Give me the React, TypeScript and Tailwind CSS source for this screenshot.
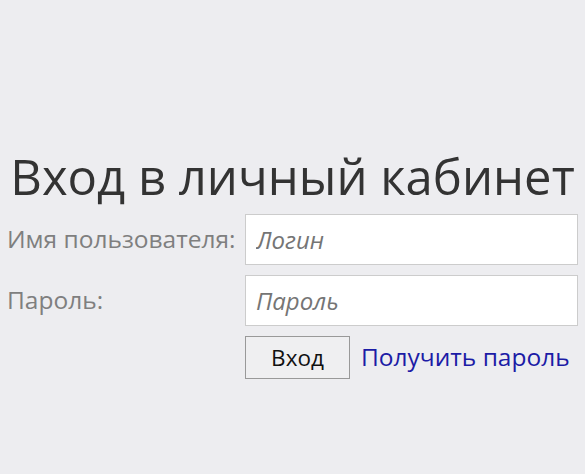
import React from 'react';

export default function App() {
  return (
    <div className="min-h-[474px] w-full bg-[#ededf0] font-['Open_Sans',sans-serif] pt-[143px]">
      <h1 className="text-center text-[49px] leading-[66px] text-[#333] whitespace-nowrap">
        Вход в личный кабинет
      </h1>
      <form
        className="grid grid-cols-[245px_333px] gap-y-[10px] mt-[5px]"
        onSubmit={(e) => e.preventDefault()}
      >
        <label className="flex items-center pl-[7px] text-[24.5px] text-[#7f7f7f] whitespace-nowrap">
          Имя пользователя:
        </label>
        <input
          type="text"
          placeholder="Логин"
          className="h-[51px] border border-[#ccc] bg-white px-[10px] text-[24px] italic placeholder:text-[#757575] outline-none"
        />
        <label className="flex items-center pl-[7px] text-[24.5px] text-[#7f7f7f]">
          Пароль:
        </label>
        <input
          type="password"
          placeholder="Пароль"
          className="h-[51px] border border-[#ccc] bg-white px-[10px] text-[24px] italic placeholder:text-[#757575] outline-none"
        />
        <div />
        <div className="flex items-center gap-[11px]">
          <button
            type="submit"
            className="w-[105px] h-[43px] border border-[#999] bg-[#efeff1] text-[22.5px] text-[#111]"
          >
            Вход
          </button>
          <a href="#" className="text-[24.5px] text-[#1c1ca6] whitespace-nowrap">
            Получить пароль
          </a>
        </div>
      </form>
    </div>
  );
}
